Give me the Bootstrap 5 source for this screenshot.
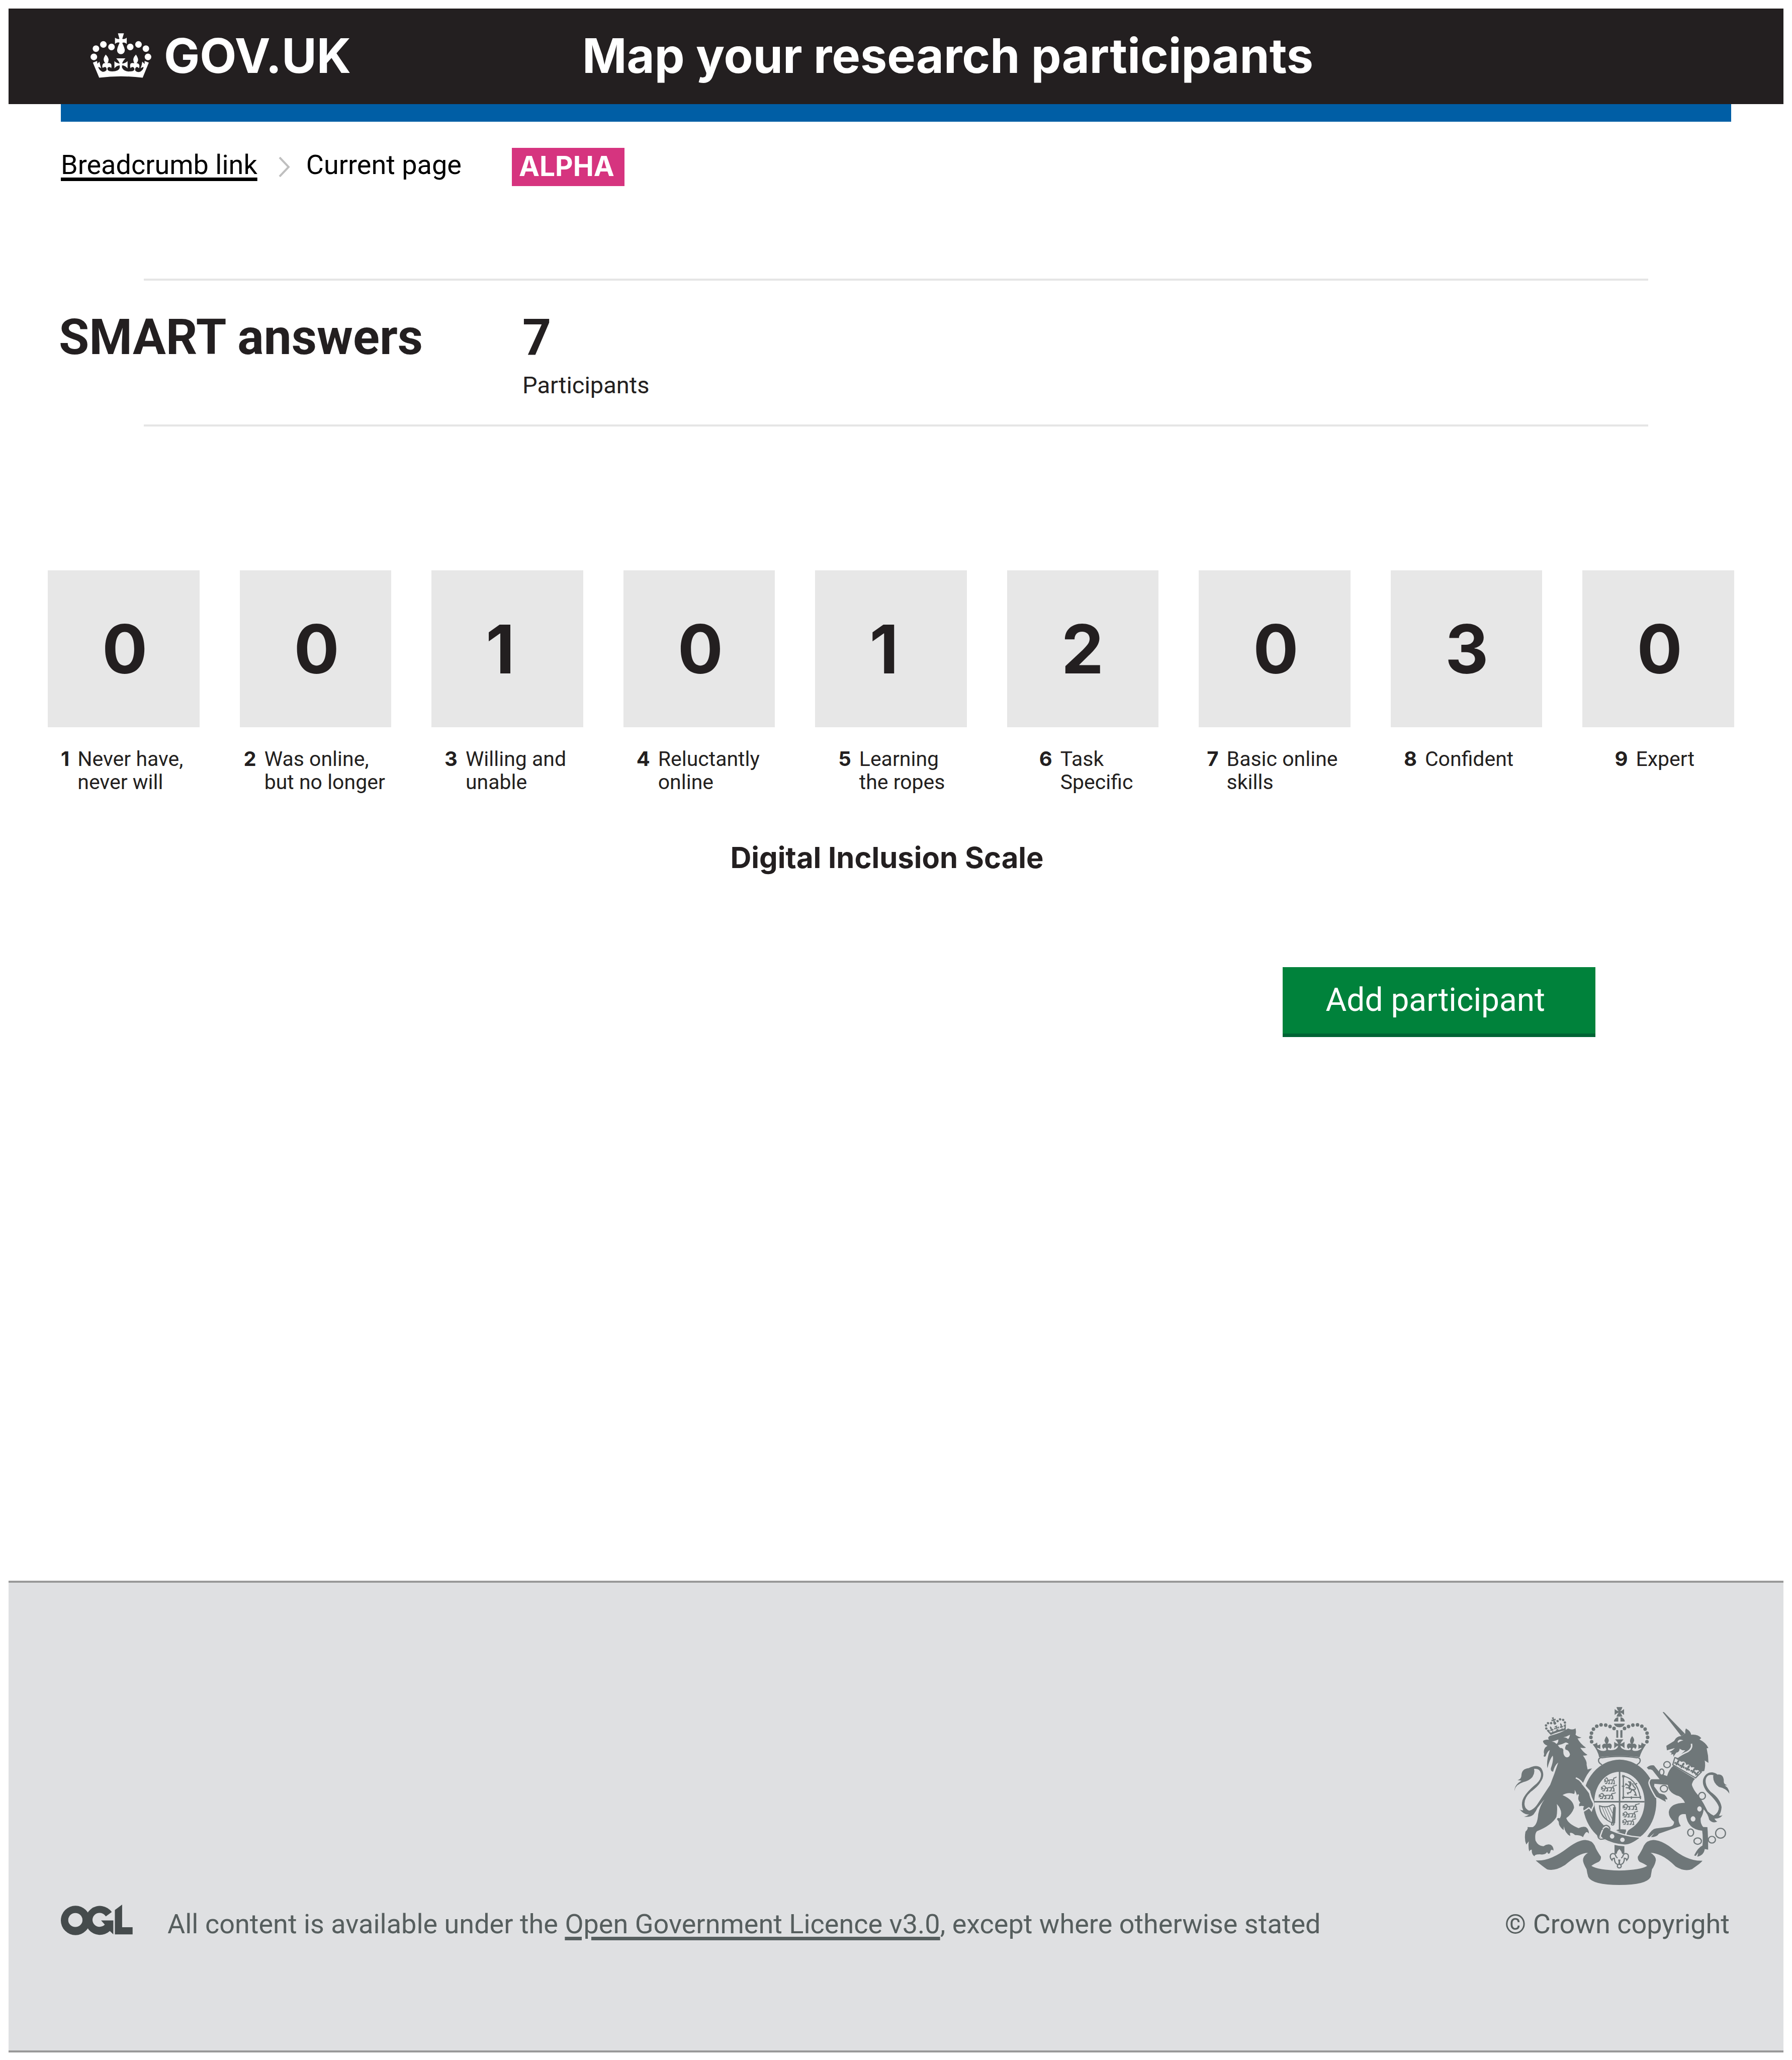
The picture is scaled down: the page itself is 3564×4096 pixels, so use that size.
<!DOCTYPE html>
<html lang="en">
<head>
<meta charset="utf-8">
<meta name="viewport" content="width=device-width, initial-scale=1">
<title>Map your research participants</title>
<link href="https://cdn.jsdelivr.net/npm/bootstrap@5.3.0/dist/css/bootstrap.min.css" rel="stylesheet">
<style>
:root{--ink:#231f20;--pale:#dfe0e2;--edge:104px;--text:Roboto,"Liberation Sans",sans-serif;--strong:Inter,"Liberation Sans",sans-serif}
body{font-family:var(--text);font-size:54px;line-height:64px;color:var(--ink);background:#fff}
.page{padding:17px 17px 15px}
.topbar{background:var(--ink);color:#fff;min-height:190px;padding-bottom:3px;font:700 95px/114px var(--strong)}
.topbar a{color:inherit;width:1141px;padding-left:163px;gap:25px}
.topbar h1{font:inherit;margin:0}
.crown{width:121px;height:89px}
.bluebar{height:35px;margin:0 var(--edge);background:#005ea5}
.trail{margin:52px var(--edge) 184px;color:#000}
.trail ol{line-height:68px;gap:32px}
.trail a{color:inherit;text-decoration-thickness:7px;text-underline-offset:7px;margin-right:10px}
.chevron{width:23px;height:40px;margin-top:18px}
.phase{font:700 55px/72px var(--strong);background:#d6347f;color:#fff;padding:0 20px 4px 14px;margin-left:100px}
.rule{margin:0 269px;border-top:4px solid #e5e5e5;opacity:1}
.summary{margin:0 var(--edge) 0 100px;padding:55px 0 50px}
.summary h2{font-size:98px;line-height:116px;font-weight:700;margin:0;width:922px}
.total{font-size:100px;line-height:116px;font-weight:700}
.total-label{font-size:47px;line-height:56px;margin-top:9px}
.scale{margin:286px 98px 0 78px}
.steps{display:grid;grid-template-columns:repeat(9,1fr);column-gap:80px}
.tile{background:#e7e7e7;height:312px;padding-left:108px;font:700 134px/312px var(--strong)}
.step-name{margin-top:40px;font-size:41px;line-height:46px;gap:16px;white-space:nowrap;min-height:92px}
.step-name b{font:700 40px/46px var(--strong)}
.in-1{padding-left:8px}.in-2{padding-left:16px}.in-3{padding-left:26px}.in-4{padding-left:46px}.in-5{padding-left:64px}
.scale h3{font:700 58px/70px var(--strong);margin:92px 0 0}
.actions{margin:183px 374px 0 var(--edge)}
.btn-add{font-size:64px;line-height:132px;padding:0 100px 0 86px;color:#fff;background:#00823b;border:0;border-bottom:7px solid #006435;border-radius:0}
.btn-add:hover{background:#006435;color:#fff}
footer{background:var(--pale);border-top:4px solid #999;border-bottom:4px solid #999;padding:247px var(--edge) 219px;color:#565e5e}
footer a{color:inherit;text-decoration-thickness:7px;text-underline-offset:7px}
.ogl{width:143px;height:61px;margin-bottom:10px;fill:#454b4c}
.licence{gap:69px}
.crest{width:428px;height:354px;fill:#6f7779}
.crest .hole{fill:var(--pale)}
.crest .over{stroke:var(--pale);stroke-width:18;paint-order:stroke}
.crest .line{fill:none;stroke:#6f7779;stroke-width:8}
.crest .gap{fill:none;stroke:var(--pale);stroke-width:10}
.crown-copy{gap:46px;padding-right:3px}
</style>
<script src="https://cdn.jsdelivr.net/npm/bootstrap@5.3.0/dist/js/bootstrap.bundle.min.js"></script>
</head>
<body>
<div class="page d-flex flex-column min-vh-100">
<header>
  <div class="topbar d-flex align-items-center">
    <a href="#" class="d-flex align-items-center text-decoration-none">
      <svg class="crown" viewBox="49 52 435 319" fill="#fff" aria-hidden="true">
        <g id="crown">
          <circle cx="88" cy="162" r="23.5"/><circle cx="141" cy="132" r="23.5"/><circle cx="199" cy="150" r="23.5"/><circle cx="333" cy="150" r="23.5"/><circle cx="392" cy="132" r="23.5"/><circle cx="445" cy="162" r="23.5"/><circle cx="73" cy="221" r="23.5"/><circle cx="460" cy="221" r="23.5"/>
          <path d="M245 52H288L276 92Q292 97 308 84V128Q290 112 276 122Q294 160 294 174A27 27 0 0 1 239 174Q240 155 257 120Q242 112 224 128V84Q243 97 256 92Z"/>
          <path d="M66 262L96 250Q98 262 97 270Q107 262 113 255Q117 280 126 303Q115 292 104 293Q112 318 135 327Q150 330 162 318Q168 305 158 294Q145 290 137 300Q132 295 133 285Q138 262 155 266Q146 258 143 242Q142 225 158 204Q172 217 178 236Q180 255 170 266Q186 262 196 272Q202 285 197 302Q192 292 178 294Q166 300 172 314Q178 325 205 325Q250 325 258 300V282Q235 283 220 303V251Q237 268 258 268Q252 250 233 231H299Q280 250 275 268Q296 268 314 251V303Q296 282 274 282V298Q290 328 327 325Q352 326 361 316Q367 303 355 294Q340 292 336 302Q328 285 336 268Q348 262 362 266Q354 250 355 236Q360 217 374 204Q392 232 389 246Q387 260 378 266Q394 265 398 280Q400 294 395 302Q388 290 376 294Q364 305 370 320Q384 332 399 328Q424 320 429 293Q417 293 407 303Q417 280 419 255Q425 262 437 272Q435 262 436 250L466 262L422 370Q266 350 111 370Z"/>
        </g>
      </svg>
      <span>GOV.UK</span>
    </a>
    <h1>Map your research participants</h1>
  </div>
  <div class="bluebar"></div>
</header>

<nav class="trail d-flex align-items-start" aria-label="Breadcrumb">
  <ol class="d-flex list-unstyled m-0">
    <li><a href="#">Breadcrumb link</a></li>
    <li class="d-flex" aria-hidden="true"><svg class="chevron" viewBox="0 0 23 40" fill="none" stroke="#bfbfbf" stroke-width="4"><path d="M2 1L20 20L2 39"/></svg></li>
    <li aria-current="page">Current page</li>
  </ol>
  <strong class="phase">ALPHA</strong>
</nav>

<main class="pb-5">
  <hr class="rule">
  <section class="summary d-flex align-items-start">
    <h2>SMART answers</h2>
    <div>
      <div class="total">7</div>
      <div class="total-label">Participants</div>
    </div>
  </section>
  <hr class="rule">

  <section class="scale">
    <div class="steps">
      <div><div class="tile">0</div><div class="step-name d-flex in-3"><b>1</b><span>Never have,<br>never will</span></div></div>
      <div><div class="tile">0</div><div class="step-name d-flex in-1"><b>2</b><span>Was online,<br>but no longer</span></div></div>
      <div><div class="tile">1</div><div class="step-name d-flex in-3"><b>3</b><span>Willing and<br>unable</span></div></div>
      <div><div class="tile">0</div><div class="step-name d-flex in-3"><b>4</b><span>Reluctantly<br>online</span></div></div>
      <div><div class="tile">1</div><div class="step-name d-flex in-4"><b>5</b><span>Learning<br>the ropes</span></div></div>
      <div><div class="tile">2</div><div class="step-name d-flex in-5"><b>6</b><span>Task<br>Specific</span></div></div>
      <div><div class="tile">0</div><div class="step-name d-flex in-2"><b>7</b><span>Basic online<br>skills</span></div></div>
      <div><div class="tile">3</div><div class="step-name d-flex in-3"><b>8</b><span>Confident</span></div></div>
      <div><div class="tile">0</div><div class="step-name d-flex in-5"><b>9</b><span>Expert</span></div></div>
    </div>
    <h3 class="text-center pe-3">Digital Inclusion Scale</h3>
  </section>
  <div class="actions d-flex justify-content-end"><button type="button" class="btn btn-add">Add participant</button></div>
</main>

<footer class="mt-auto d-flex justify-content-between align-items-end">
  <div class="licence d-flex align-items-end">
    <svg class="ogl" viewBox="46 63 515 219" role="img" aria-label="Open Government Licence">
      <path fill-rule="evenodd" d="M46 176A105 105 0 1 0 256 176A105 105 0 1 0 46 176ZM99 173A51 50 0 1 0 201 173A51 50 0 1 0 99 173Z"/>
      <path d="M411 116A104 104 0 1 0 397 252L422 276V176H334L361 206A51 50 0 1 1 368 147Z"/>
      <path d="M433 101L485 63V225H560V276H433Z"/>
    </svg>
    <div>All content is available under the <a href="#">Open Government Licence v3.0</a>, except where otherwise stated</div>
  </div>
  <div class="crown-copy d-flex flex-column align-items-end">
    <svg class="crest" viewBox="81 81 1441 1277" preserveAspectRatio="none" aria-hidden="true">
      <defs>
        <path id="fleur" d="M0-19Q11-6 3 4Q17 0 17 12Q12 21 6 12L4 20H-4L-6 12Q-12 21-17 12Q-17 0-3 4Q-11-6 0-19Z"/>
        <g id="passant" class="line"><path d="M0 20L14 22M2 12L12 15M12 8Q22-4 28 8L36 22Q58 14 78 18Q92 20 88 38L90 46H78M30 20L22 44H8M20 26L0 32M44 24L46 45H34M72 22L68 45H56M86 22Q76 2 92 2Q104 0 108-6"/></g>
      </defs>
      <!-- state crown -->
      <path d="M764 82H804Q800 100 789 112Q803 108 815 96V139Q803 126 790 122Q800 137 804 150H764Q768 137 779 122Q765 126 752 139V96Q765 108 779 112Q768 100 764 82ZM747 186A36 33 0 0 1 776 154V186ZM791 154A36 33 0 0 1 820 186H791ZM747 201H820A37 31 0 0 1 747 201ZM763 246L776 249V302H763ZM790 249L804 246V302H790Z"/>
      <g id="pearls"><ellipse cx="748" cy="235" rx="12" ry="13"/><ellipse cx="721" cy="221" rx="12" ry="13"/><ellipse cx="692" cy="211" rx="12" ry="13"/><ellipse cx="661" cy="209" rx="12" ry="13"/><ellipse cx="632" cy="219" rx="12" ry="13"/><ellipse cx="610" cy="240" rx="12" ry="13"/><ellipse cx="597" cy="269" rx="12" ry="13"/><ellipse cx="593" cy="299" rx="12" ry="13"/><ellipse cx="598" cy="330" rx="12" ry="13"/></g>
      <use href="#pearls" transform="translate(1566 0) scale(-1 1)"/>
      <path d="M605 350Q625 346 634 335Q636 350 638 357Q648 354 656 348V383Q645 373 632 375Q650 398 680 397Q708 392 690 372Q680 372 679 383Q664 372 669 355Q677 340 694 346Q684 330 684 320Q688 304 697 290Q710 304 713 320Q712 335 704 346Q722 338 730 350Q738 370 722 383Q718 370 708 374Q697 395 730 391Q770 390 776 360Q762 362 749 379V331Q764 345 776 346Q770 328 755 314H811Q797 330 790 346Q804 344 818 331V379Q805 362 790 360Q795 388 836 391Q870 392 858 374Q850 370 845 383Q829 370 837 350Q845 338 862 346Q853 332 855 320Q858 304 869 290Q882 304 883 320Q880 335 873 346Q890 340 898 355Q902 372 888 383Q887 372 877 372Q858 392 888 397Q917 398 934 375Q920 373 911 383V348Q920 354 928 357Q930 350 933 335Q942 346 962 350Q930 400 919 442Q850 432 783 432Q716 432 648 442Q640 395 605 350Z"/>
      <path class="line" stroke-linecap="round" d="M664 494Q642 480 644 462Q648 442 668 446Q720 436 783 436Q850 436 899 446Q920 442 923 462Q925 480 903 494"/>
      <!-- garter and shield -->
      <path fill-rule="evenodd" d="M539 762A246 303 0 1 0 1031 762A246 303 0 1 0 539 762ZM616 762A168 216 0 1 0 952 762A168 216 0 1 0 616 762Z"/>
      <path d="M780 545H790V965H780ZM614 756H952V766H614Z"/>
      <use href="#passant" transform="translate(682 588) scale(.76 .95)"/>
      <use href="#passant" transform="translate(660 645) scale(.98 .85)"/>
      <use href="#passant" transform="translate(645 700) scale(1.05 .85)"/>
      <use href="#passant" transform="translate(805 778) scale(1.05 .85)"/>
      <use href="#passant" transform="translate(805 832) scale(.95 .85)"/>
      <use href="#passant" transform="translate(803 885) scale(.85 .85)"/>
      <path class="line" d="M804 570L818 584M802 584L818 572M810 575V740M802 730H928M925 720V742M805 742L818 724M815 578Q905 605 924 735M885 640L902 628M800 650H818M864 722V742"/>
      <path class="line" d="M842 618L856 618Q868 628 858 644Q844 662 864 672Q884 678 890 695L896 715L882 710M850 650L824 630M822 642L834 634M852 662L826 660M866 676L858 694L838 698L842 708M848 616Q860 632 850 650Q842 664 856 674"/>
      <path class="line" d="M872 672Q892 682 890 662Q866 640 876 628"/>
      <path class="line" d="M650 786Q655 880 742 915Q756 880 752 790Q742 776 725 788Q690 806 650 790M740 908Q728 912 732 926Q746 934 748 916"/>
      <path d="M666 800L698 886H702L670 800ZM682 802L720 895H724L686 802ZM698 800L736 890V878L702 800ZM714 794L740 852V842L718 794Z"/>
      <path d="M742 800H760L755 915H732Z"/>
      <path class="gap" d="M826 1000Q828 968 856 950"/>
      <path class="over" d="M660 1008L676 960Q690 935 712 952L724 968Q810 1010 918 1020Q860 1068 820 1068Q740 1064 672 1022Z"/>
      <path d="M762 966Q775 955 829 960L822 988Q790 982 762 966Z"/>
      <path class="line" d="M654 970Q672 928 698 930Q722 938 720 962M672 956Q636 966 638 1000Q644 1036 668 1029L688 1026"/>
      <ellipse class="hole" cx="735" cy="1009" rx="15" ry="17"/><ellipse class="hole" cx="804" cy="1034" rx="15" ry="16"/>
      <path d="M751 1070Q785 1080 817 1080V1134H751Z"/>
      <path class="hole" d="M783 1100Q812 1130 797 1165H770Q755 1130 783 1100Z"/>
      <g id="lily"><path class="line" d="M772 1164Q762 1162 756 1140Q740 1124 726 1140Q716 1160 734 1180Q736 1166 750 1166Q750 1206 774 1211"/></g>
      <use href="#lily" transform="translate(1567 0) scale(-1 1)"/>
      <path d="M775 1176H791Q786 1190 789 1208H777Q780 1190 775 1176Z"/><circle class="line" cx="783" cy="1223" r="13"/>
      <!-- lion -->
      <path class="over" d="M318 288Q400 265 440 235Q470 250 490 234Q496 260 490 280Q505 295 530 300Q515 308 503 306Q520 345 560 373Q545 378 522 373Q540 405 570 425Q555 432 540 430Q568 470 564 495L571 530Q585 524 601 522Q565 560 541 625L530 632Q560 670 583 705Q588 730 603 760Q612 790 600 800L595 815Q585 800 578 800Q565 810 545 823Q537 805 548 795Q535 788 515 793Q510 775 522 768Q500 745 513 712Q502 700 500 718Q494 690 484 676Q487 695 480 705Q440 690 403 713Q480 750 480 805Q465 850 428 878Q440 920 510 950Q540 935 560 943Q580 960 580 990Q570 975 560 980Q550 990 540 1015Q525 1000 487 1000Q465 980 452 985L455 1007Q420 990 412 937L410 965Q375 935 378 905L365 885Q372 872 385 880Q410 830 365 777Q370 830 362 870Q330 930 232 972Q215 990 222 1040Q240 1080 275 1080Q300 1060 325 1070Q345 1085 342 1112Q325 1095 320 1125Q308 1145 300 1122Q285 1145 250 1138Q215 1138 215 1152Q195 1140 197 1105Q185 1105 180 1118Q172 1085 177 1045L160 1068Q145 1030 155 975Q175 955 168 942Q195 945 205 942Q235 925 240 850Q250 790 283 743Q265 765 235 805Q225 830 210 850Q190 875 145 868Q165 865 180 850Q150 860 115 815Q125 825 140 822Q125 790 135 750Q150 700 230 630Q265 595 258 555Q248 520 212 525Q220 555 200 585Q180 610 140 620Q85 640 81 684Q80 640 128 610Q115 608 102 606Q128 600 128 570Q130 525 175 520Q230 490 260 520Q290 570 255 620Q240 650 190 690Q140 740 150 790Q155 815 180 825Q215 815 240 770L320 640Q350 560 374 480Q350 500 340 545Q322 545 325 520Q345 460 337 430Q315 460 302 520Q292 475 318 390Q300 400 290 435Q270 445 280 420Q270 380 302 360Q272 345 272 325Q285 312 312 316Q300 300 318 288Z"/>
      <path class="gap" d="M492 590Q515 600 530 620L583 685Q590 735 610 768"/>
      <path class="hole" d="M330 330Q355 325 375 315Q375 340 362 346Q348 330 330 330ZM408 298Q430 295 453 280Q448 305 440 312Q430 298 408 298ZM372 355Q400 350 425 335Q442 340 444 348Q425 350 425 360Q416 375 424 388Q445 390 453 420Q450 443 430 443Q408 435 408 400Q412 380 395 375Q385 380 372 355Z"/>
      <use href="#crown" transform="translate(373 262) rotate(-19) scale(.34 .36) translate(-266 -362)"/>
      <!-- unicorn -->
      <path class="over" d="M1145 502L1290 597Q1272 615 1269 640Q1280 680 1320 725Q1350 775 1375 830Q1395 850 1415 860Q1450 840 1450 800Q1440 760 1370 690Q1335 640 1345 600Q1360 550 1405 550Q1430 555 1440 566Q1480 560 1483 610Q1480 635 1505 643L1490 645Q1520 665 1520 703Q1500 665 1450 655Q1405 620 1413 570Q1365 560 1361 610Q1360 650 1395 690Q1460 740 1468 800Q1465 840 1450 860Q1465 865 1475 855Q1460 885 1420 882Q1430 900 1440 903Q1410 920 1385 890Q1378 850 1348 815Q1345 850 1328 880Q1325 920 1345 942L1373 943Q1378 1000 1378 1105L1355 1100Q1350 1145 1305 1155L1312 1125L1295 1150L1284 1146Q1310 1090 1340 1075Q1345 1020 1338 968Q1240 960 1228 850Q1190 845 1181 870Q1175 905 1195 935L1048 990Q1035 1015 995 1015L1018 985L985 1015L970 1012Q1000 955 1030 952L1120 940Q1150 935 1150 905Q1110 870 1115 830Q1125 770 1223 768Q1200 720 1165 715Q1110 690 1108 640L1018 632L1016 650L1050 700L1085 710Q1105 730 1105 745L1090 742L1095 762Q1050 735 1030 725Q990 655 986 625Q990 600 1000 600L1053 600L1005 535Q990 525 980 530L967 517Q985 495 1015 500L1060 560L1103 577Q1115 530 1145 502Z"/>
      <path d="M1074 120Q1077 114 1084 120L1222 272L1198 290Z"/>
      <path d="M1198 290L1225 270Q1222 250 1229 235Q1262 255 1264 280Q1310 275 1332 305L1320 315Q1360 335 1380 375L1368 378Q1380 430 1380 482L1355 465Q1362 500 1352 540L1330 545L1290 560L1230 520L1165 455Q1190 425 1225 392Q1205 395 1187 380Q1187 405 1165 408L1145 438V420L1128 422L1135 410L1118 403Q1140 395 1155 376L1102 392L1098 360L1150 325Q1165 290 1198 290Z"/>
      <path class="gap" d="M1266 345Q1275 380 1240 402Q1190 425 1168 448"/>
      <path class="hole" d="M1173 332Q1182 306 1212 322Q1190 325 1178 338Z"/>
      <path class="hole" d="M1156 450L1145 492L1292 584L1325 552Q1315 528 1295 536Q1290 505 1265 515Q1250 485 1232 498Q1225 465 1200 475Z"/>
      <path class="line" d="M1178 452L1155 444L1141 496L1294 590L1332 548L1318 540"/>
      <use href="#fleur" transform="translate(1174 478) rotate(28) scale(1.15)"/><use href="#fleur" transform="translate(1208 498) rotate(28) scale(1.15)"/><use href="#fleur" transform="translate(1244 516) rotate(28) scale(1.15)"/><use href="#fleur" transform="translate(1282 535) rotate(28) scale(1.15)"/><use href="#fleur" transform="translate(1306 556) rotate(40)"/>
      <ellipse class="hole" cx="1320" cy="812" rx="15" ry="19"/><ellipse class="hole" cx="1277" cy="884" rx="16" ry="19"/><ellipse class="hole" cx="1067" cy="548" rx="14" ry="20"/><ellipse class="hole" cx="1337" cy="719" rx="20" ry="22"/><ellipse class="hole" cx="1082" cy="667" rx="20" ry="22"/>
      <g class="line"><ellipse cx="1103" cy="495" rx="22" ry="22"/><ellipse cx="1067" cy="548" rx="15" ry="22"/><ellipse cx="1082" cy="667" rx="24" ry="24"/><ellipse cx="1337" cy="719" rx="23" ry="25"/><ellipse cx="1261" cy="982" rx="20" ry="26"/><ellipse cx="1308" cy="1043" rx="25" ry="23"/><ellipse cx="1403" cy="1033" rx="24" ry="24"/><ellipse cx="1461" cy="987" rx="33" ry="35"/></g>
      <!-- scroll -->
      <path d="M225 1182Q320 1190 440 1090Q510 1035 555 1035Q600 1037 618 1075Q630 1110 660 1155Q662 1180 645 1192Q610 1208 596 1221Q640 1252 783 1254Q925 1252 970 1221Q955 1208 920 1192Q905 1180 907 1155Q935 1110 948 1075Q968 1037 1010 1035Q1060 1035 1130 1090Q1240 1190 1340 1184Q1330 1200 1270 1244Q1220 1265 1160 1225Q1070 1130 993 1127Q1028 1150 1028 1180Q1022 1215 1002 1245L993 1300Q965 1358 783 1358Q605 1358 575 1300Q567 1270 564 1245Q540 1200 540 1180Q540 1150 573 1127Q510 1130 420 1215Q350 1262 300 1246Q270 1225 225 1184Z"/>
    </svg>
    <div>© Crown copyright</div>
  </div>
</footer>
</div>
</body>
</html>
